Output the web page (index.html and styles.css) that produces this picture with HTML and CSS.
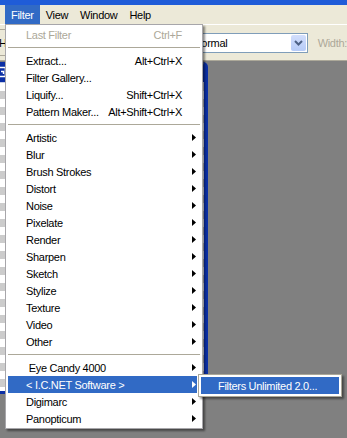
FILE: index.html
```html
<!DOCTYPE html>
<html lang="en">
<head>
    <meta charset="UTF-8">
    <meta name="viewport" content="width=device-width, initial-scale=1.0">
    <title>Filter Menu</title>
    <link rel="stylesheet" href="styles.css">
</head>
<body>

    <div class="app">
        <div class="titlebar"></div>

        <div class="menubar">
            <span class="menubar-item active">Filter</span>
            <span class="menubar-item">View</span>
            <span class="menubar-item">Window</span>
            <span class="menubar-item">Help</span>
        </div>

        <div class="options">
            <div class="tool-btn">H</div>
            <div class="mode-select">
                <span class="mode-text">Normal</span>
                <span class="drop-btn">
                    <svg width="9" height="6" viewBox="0 0 9 6"><path d="M1 1 L4.5 4.5 L8 1" fill="none" stroke="#4d6185" stroke-width="2"/></svg>
                </span>
            </div>
            <span class="opt-label">Width:</span>
        </div>

        <div class="workspace">
            <div class="docwin">
                <div class="doc-title">
                    <svg class="doc-icon" width="7" height="12" viewBox="0 0 7 12"><path d="M-2 1.5 H5.5 V10.5 H-2" fill="none" stroke="#fff" stroke-width="1.6"/><path d="M1 5.5 H3.5 V8" fill="none" stroke="#fff" stroke-width="1.4"/></svg>
                </div>
                <div class="canvas"></div>
            </div>
        </div>

        <!-- Filter drop-down menu -->
        <div class="menu">
            <div class="item disabled"><span class="label">Last Filter</span><span class="key">Ctrl+F</span></div>
            <div class="sep"></div>
            <div class="item"><span class="label">Extract...</span><span class="key">Alt+Ctrl+X</span></div>
            <div class="item"><span class="label">Filter Gallery...</span></div>
            <div class="item"><span class="label">Liquify...</span><span class="key">Shift+Ctrl+X</span></div>
            <div class="item"><span class="label">Pattern Maker...</span><span class="key">Alt+Shift+Ctrl+X</span></div>
            <div class="sep"></div>
            <div class="item sub"><span class="label">Artistic</span></div>
            <div class="item sub"><span class="label">Blur</span></div>
            <div class="item sub"><span class="label">Brush Strokes</span></div>
            <div class="item sub"><span class="label">Distort</span></div>
            <div class="item sub"><span class="label">Noise</span></div>
            <div class="item sub"><span class="label">Pixelate</span></div>
            <div class="item sub"><span class="label">Render</span></div>
            <div class="item sub"><span class="label">Sharpen</span></div>
            <div class="item sub"><span class="label">Sketch</span></div>
            <div class="item sub"><span class="label">Stylize</span></div>
            <div class="item sub"><span class="label">Texture</span></div>
            <div class="item sub"><span class="label">Video</span></div>
            <div class="item sub"><span class="label">Other</span></div>
            <div class="sep"></div>
            <div class="item sub"><span class="label">&nbsp;Eye Candy 4000</span></div>
            <div class="item sub selected"><span class="label">&lt; I.C.NET Software &gt;</span></div>
            <div class="item sub"><span class="label">Digimarc</span></div>
            <div class="item sub"><span class="label">Panopticum</span></div>
        </div>

        <!-- I.C.NET submenu -->
        <div class="submenu">
            <div class="item selected"><span class="label">Filters Unlimited 2.0...</span></div>
        </div>
    </div>

</body>
</html>
```

FILE: styles.css
```css
body {
    margin: 0;
    padding: 0;
    font-family: "Liberation Sans", Arial, sans-serif;
    font-size: 11px;
    letter-spacing: -0.3px;
    color: #000;
    background: #808080;
}
.app {
    position: relative;
    width: 347px;
    height: 438px;
    overflow: hidden;
    display: flex;
    flex-direction: column;
}
.titlebar {
    height: 5px;
    background: #1f5cd8;
}
.menubar {
    height: 19px;
    background: #ece9d8;
    display: flex;
    padding-left: 5px;
}
.menubar-item {
    display: flex;
    align-items: center;
    padding: 0 6px;
}
.menubar-item.active {
    background: #316ac5;
    color: #fff;
}
.options {
    height: 35px;
    background: #ece9d8;
    border-top: 1px solid #fff;
    border-bottom: 1px solid #aca899;
    display: flex;
    align-items: center;
}
.tool-btn {
    margin-left: -5px;
    width: 11px;
    height: 25px;
    padding-left: 4px;
    border: 1px solid #aca899;
    border-left: none;
    display: flex;
    align-items: center;
}
.mode-select {
    margin-left: 181px;
    width: 117px;
    height: 18px;
    border: 1px solid #7f9db9;
    background: #fff;
    display: flex;
    align-items: center;
    justify-content: space-between;
}
.mode-text {
    padding-left: 1px;
}
.drop-btn {
    width: 15px;
    height: 16px;
    margin-right: 1px;
    border-radius: 2px;
    background: linear-gradient(#d2defc, #b6cbf7);
    display: flex;
    align-items: center;
    justify-content: center;
}
.opt-label {
    margin-left: 10px;
    color: #aca899;
}
.workspace {
    flex: 1;
    padding-top: 1px;
}
.docwin {
    width: 208px;
    height: 332px;
    box-sizing: border-box;
    border-right: 4px solid #0b2fa5;
    border-bottom: 3px solid #0b2fa5;
    border-top-right-radius: 5px;
    display: flex;
    flex-direction: column;
}
.doc-title {
    height: 20px;
    background: #0b2fa5;
    border-top-right-radius: 4px;
    border-bottom: 1px solid #c8d0e8;
    display: flex;
    align-items: center;
}
.canvas {
    flex: 1;
    background-color: #fff;
    background-image: conic-gradient(#ccc 25%, #fff 0 50%, #ccc 0 75%, #fff 0);
    background-size: 16px 16px;
}

/* drop-down menu */
.menu {
    position: absolute;
    left: 5px;
    top: 24px;
    width: 196px;
    padding: 1px 0;
    background: #fff;
    border: 1px solid #a7a6aa;
    box-shadow: 2px 2px 2px rgba(0, 0, 0, 0.45);
}
.item {
    height: 17px;
    margin: 0 5px 0 2px;
    padding: 0 1px 0 18px;
    display: flex;
    align-items: center;
    white-space: pre;
}
.item .label {
    flex: 1;
}
.item .key {
    margin-right: 14px;
}
.item.sub::after {
    content: "";
    width: 4px;
    height: 7px;
    background: #000;
    clip-path: polygon(0 0, 100% 50%, 0 100%);
}
.item.disabled {
    color: #aca899;
}
.item.selected {
    background: #316ac5;
    color: #fff;
}
.item.selected::after {
    background: #fff;
}
.sep {
    height: 1px;
    margin: 4px 2px;
    background: #aca899;
}

/* submenu */
.submenu {
    position: absolute;
    left: 198px;
    top: 374px;
    width: 138px;
    padding: 2px;
    background: #fff;
    border: 1px solid #aca899;
    box-shadow: 2px 2px 2px rgba(0, 0, 0, 0.45);
}
.submenu .item {
    margin: 0;
    padding-left: 17px;
}
```
